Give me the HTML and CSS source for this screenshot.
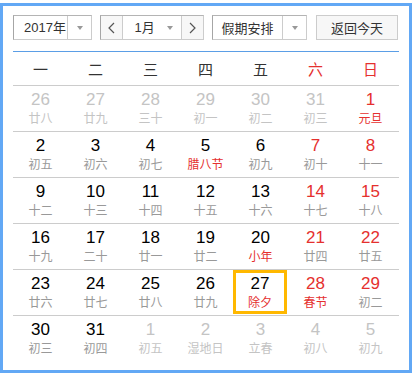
FILE: index.html
```html
<!DOCTYPE html>
<html lang="zh-CN">
<head>
    <meta charset="UTF-8">
    <meta name="viewport" content="width=device-width, initial-scale=1.0">
    <title>万年历</title>
    <link rel="stylesheet" href="styles.css">
</head>
<body>
    <div class="calendar">
        <div class="toolbar">
            <div class="select year-select">
                <span class="select-text">2017年</span>
                <span class="select-arrow"><i class="caret"></i></span>
            </div>

            <div class="month-picker">
                <span class="nav-btn">
                    <svg width="7" height="12" viewBox="0 0 7 12"><polyline points="6,1 1,6 6,11" fill="none" stroke="#555" stroke-width="1.2"/></svg>
                </span>
                <div class="month-select">
                    <span class="select-text">1月</span>
                    <i class="caret"></i>
                </div>
                <span class="nav-btn">
                    <svg width="7" height="12" viewBox="0 0 7 12"><polyline points="1,1 6,6 1,11" fill="none" stroke="#555" stroke-width="1.2"/></svg>
                </span>
            </div>

            <div class="select holiday-select">
                <span class="select-text">假期安排</span>
                <span class="select-arrow"><i class="caret"></i></span>
            </div>

            <button class="today-btn">返回今天</button>
        </div>

        <div class="weekdays">
            <span>一</span><span>二</span><span>三</span><span>四</span><span>五</span>
            <span class="weekend">六</span><span class="weekend">日</span>
        </div>

        <div class="weeks">
            <div class="week">
                <div class="day other"><b>26</b><em>廿八</em></div>
                <div class="day other"><b>27</b><em>廿九</em></div>
                <div class="day other"><b>28</b><em>三十</em></div>
                <div class="day other"><b>29</b><em>初一</em></div>
                <div class="day other"><b>30</b><em>初二</em></div>
                <div class="day other"><b>31</b><em>初三</em></div>
                <div class="day weekend festival"><b>1</b><em>元旦</em></div>
            </div>
            <div class="week">
                <div class="day"><b>2</b><em>初五</em></div>
                <div class="day"><b>3</b><em>初六</em></div>
                <div class="day"><b>4</b><em>初七</em></div>
                <div class="day festival"><b>5</b><em>腊八节</em></div>
                <div class="day"><b>6</b><em>初九</em></div>
                <div class="day weekend"><b>7</b><em>初十</em></div>
                <div class="day weekend"><b>8</b><em>十一</em></div>
            </div>
            <div class="week">
                <div class="day"><b>9</b><em>十二</em></div>
                <div class="day"><b>10</b><em>十三</em></div>
                <div class="day"><b>11</b><em>十四</em></div>
                <div class="day"><b>12</b><em>十五</em></div>
                <div class="day"><b>13</b><em>十六</em></div>
                <div class="day weekend"><b>14</b><em>十七</em></div>
                <div class="day weekend"><b>15</b><em>十八</em></div>
            </div>
            <div class="week">
                <div class="day"><b>16</b><em>十九</em></div>
                <div class="day"><b>17</b><em>二十</em></div>
                <div class="day"><b>18</b><em>廿一</em></div>
                <div class="day"><b>19</b><em>廿二</em></div>
                <div class="day festival"><b>20</b><em>小年</em></div>
                <div class="day weekend"><b>21</b><em>廿四</em></div>
                <div class="day weekend"><b>22</b><em>廿五</em></div>
            </div>
            <div class="week">
                <div class="day"><b>23</b><em>廿六</em></div>
                <div class="day"><b>24</b><em>廿七</em></div>
                <div class="day"><b>25</b><em>廿八</em></div>
                <div class="day"><b>26</b><em>廿九</em></div>
                <div class="day festival today"><b>27</b><em>除夕</em></div>
                <div class="day weekend festival"><b>28</b><em>春节</em></div>
                <div class="day weekend"><b>29</b><em>初二</em></div>
            </div>
            <div class="week">
                <div class="day"><b>30</b><em>初三</em></div>
                <div class="day"><b>31</b><em>初四</em></div>
                <div class="day other"><b>1</b><em>初五</em></div>
                <div class="day other"><b>2</b><em>湿地日</em></div>
                <div class="day other"><b>3</b><em>立春</em></div>
                <div class="day other"><b>4</b><em>初八</em></div>
                <div class="day other"><b>5</b><em>初九</em></div>
            </div>
        </div>
    </div>
</body>
</html>
```

FILE: styles.css
```css
* {
    box-sizing: border-box;
}

body {
    margin: 0;
    padding: 0;
    background: #fff;
    font-family: 'Liberation Sans', 'Noto Sans CJK SC', sans-serif;
    color: #333;
}

.calendar {
    width: 412px;
    height: 370px;
    margin-top: 3px;
    border: 3px solid #62a8f5;
    padding: 9px 10px 0 10px;
}

/* toolbar */
.toolbar {
    display: flex;
    height: 25px;
    margin-bottom: 11px;
}

.select,
.month-picker {
    display: flex;
    height: 25px;
    border: 1px solid #ccc;
    border-left-color: #a6a6a6;
    border-top-color: #b4b4b4;
    background: #fff;
    font-size: 13px;
    line-height: 23px;
}

.select-text {
    color: #333;
}

.year-select {
    width: 79px;
}

.year-select .select-text {
    width: 54px;
    padding-left: 10px;
    border-right: 1px solid #ccc;
}

.select-arrow {
    flex: 1;
    display: flex;
    align-items: center;
    justify-content: center;
}

.caret {
    display: block;
    width: 0;
    height: 0;
    border-left: 3.5px solid transparent;
    border-right: 3.5px solid transparent;
    border-top: 4px solid #999;
}

.month-picker {
    width: 104px;
    margin-left: 8px;
}

.nav-btn {
    width: 22px;
    display: flex;
    align-items: center;
    justify-content: center;
    background: #f7f7f7;
}

.month-select {
    width: 60px;
    display: flex;
    align-items: center;
    justify-content: space-between;
    padding: 0 8px 0 11px;
    border-left: 1px solid #ccc;
    border-right: 1px solid #ccc;
}

.holiday-select {
    width: 95px;
    margin-left: 8px;
}

.holiday-select .select-text {
    width: 70px;
    text-align: center;
    border-right: 1px solid #ccc;
    font-family: 'Noto Sans CJK SC', sans-serif;
}

.today-btn {
    width: 82px;
    height: 25px;
    margin-left: 9px;
    padding: 0;
    border: 1px solid #ccc;
    background: #f7f7f7;
    color: #333;
    font-family: 'Noto Sans CJK SC', sans-serif;
    font-size: 13px;
    cursor: pointer;
}

/* week header */
.weekdays {
    display: grid;
    grid-template-columns: repeat(7, 55px);
    height: 35px;
    border-top: 1px solid #5b9ee6;
    border-bottom: 1px solid #ccc;
    align-items: center;
    text-align: center;
    font-family: 'Noto Sans CJK SC', sans-serif;
    font-size: 15px;
    color: #333;
}

.weekdays .weekend {
    color: #e5302e;
}

/* days */
.week {
    display: grid;
    grid-template-columns: repeat(7, 55px);
    height: 46px;
    border-top: 1px solid #ccc;
}

.week:first-child {
    height: 45px;
    border-top: none;
}

.day {
    display: flex;
    flex-direction: column;
    align-items: center;
    padding-top: 4px;
}

.day b {
    font-weight: normal;
    font-size: 17px;
    line-height: 20px;
    color: #000;
}

.day em {
    font-style: normal;
    font-family: 'Noto Sans CJK SC', sans-serif;
    font-size: 12px;
    line-height: 16px;
    color: #999;
}

.day.weekend b {
    color: #e5302e;
}

.day.festival em {
    color: #e5302e;
}

.day.other b,
.day.other em {
    color: #c4c4c4;
}

.day.today {
    width: 54px;
    height: 44px;
    padding-top: 1px;
    border: 3px solid #ffb800;
}
```
